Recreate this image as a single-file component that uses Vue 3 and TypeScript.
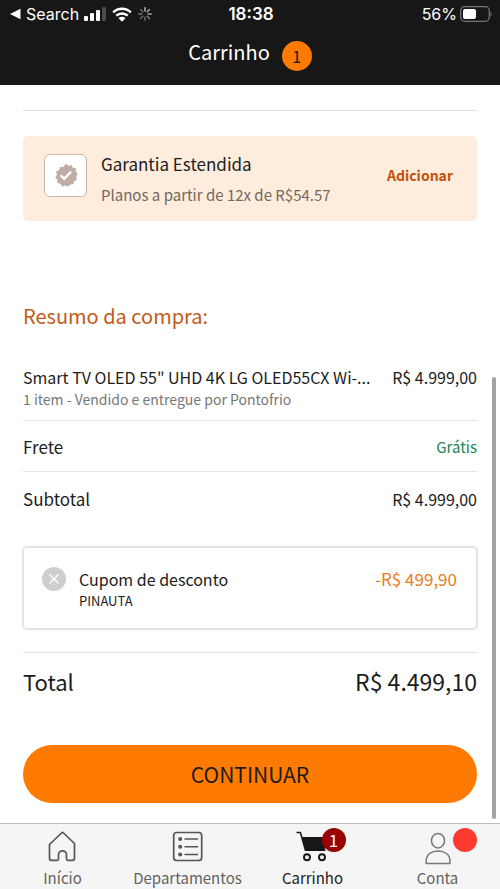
<script setup lang="ts">
interface Tab {
  id: 'home' | 'departments' | 'cart' | 'account'
  label: string
}

const tabs: Tab[] = [
  { id: 'home', label: 'Início' },
  { id: 'departments', label: 'Departamentos' },
  { id: 'cart', label: 'Carrinho' },
  { id: 'account', label: 'Conta' },
]
const activeTab: Tab['id'] = 'cart'
const cartCount = 1
const spokes = [0, 45, 90, 135, 180, 225, 270, 315]
</script>

<template>
  <div class="screen">
    <header class="top">
      <div class="status">
        <div class="status-left">
          <svg width="11" height="12" viewBox="0 0 11 12" aria-hidden="true"><path d="M0 6 10.500 .8v10.400z" fill="#fff" /></svg>
          <span class="status-text back">Search</span>
          <svg class="signal" width="22" height="14" viewBox="0 0 22 14" aria-hidden="true">
            <rect x="0" y="9" width="4" height="5" rx="1" fill="#fff" />
            <rect x="6" y="6" width="4" height="8" rx="1" fill="#fff" />
            <rect x="12" y="3" width="4" height="11" rx="1" fill="#fff" />
            <rect x="18" y="0" width="4" height="14" rx="1" fill="#4b4b4b" />
          </svg>
          <svg class="wifi" width="20" height="15" viewBox="0 0 20 15" aria-hidden="true">
            <path d="M1.200 5.400a12.600 12.600 0 0 1 17.600 0M4.300 8.700a8.200 8.200 0 0 1 11.400 0" fill="none" stroke="#fff" stroke-width="2.500" />
            <path d="M6.500 11.200a5 5 0 0 1 7 0L10 14.800z" fill="#fff" />
          </svg>
          <svg class="spinner" width="14" height="14" viewBox="0 0 14 14" aria-hidden="true">
            <line
              v-for="(angle, i) in spokes"
              :key="angle"
              x1="7" y1=".7" x2="7" y2="4"
              stroke="#fff" stroke-width="1.300" stroke-linecap="round"
              :opacity="i < 4 ? 0.8 - i * 0.1 : 0.4"
              :transform="`rotate(${angle} 7 7)`"
            />
          </svg>
        </div>
        <span class="status-text clock">18:38</span>
        <div class="status-right">
          <span class="status-text">56%</span>
          <svg width="32" height="16" viewBox="0 0 32 16" aria-hidden="true">
            <rect x=".7" y=".7" width="28.600" height="14.600" rx="4" fill="none" stroke="#747474" stroke-width="1.300" />
            <rect x="3" y="3" width="13" height="10" rx="2" fill="#fff" />
            <path d="M30.500 5.500c1.500.6 1.500 4.400 0 5z" fill="#747474" />
          </svg>
        </div>
      </div>
      <div class="title-row">
        <h1>Carrinho</h1>
        <span class="count">{{ cartCount }}</span>
      </div>
    </header>

    <main>
      <section class="warranty">
        <span class="seal-box">
          <svg width="24" height="24" viewBox="0 0 24 24" aria-hidden="true">
            <path d="m12 .8 2.400 2 3-.9 1.400 2.900 3.100.5-.1 3.200 2 2.500-1.600 2.700.7 3.100-2.800 1.500-.9 3-3.200.1-2 2.400-2.800-1.300-3 .9-1.800-2.600-3.100-.8.100-3.200-2.200-2.400 1.700-2.700-.8-3.100 2.900-1.400L5.900 4l3.200-.1z" fill="#c0ada4" />
            <path d="m6.600 12.200 3.600 3.600 7-7.200" fill="none" stroke="#fff" stroke-width="2.300" />
          </svg>
        </span>
        <div class="warranty-text">
          <h2>Garantia Estendida</h2>
          <p>Planos a partir de 12x de R$54.57</p>
        </div>
        <button type="button" class="add">Adicionar</button>
      </section>

      <section class="summary">
        <h2>Resumo da compra:</h2>
        <dl>
          <div class="line product">
            <dt>
              <span class="name">Smart TV OLED 55" UHD 4K LG OLED55CX Wi-...</span>
              <span class="seller">1 item - Vendido e entregue por Pontofrio</span>
            </dt>
            <dd>R$ 4.999,00</dd>
          </div>
          <div class="line">
            <dt>Frete</dt>
            <dd class="free">Grátis</dd>
          </div>
          <div class="line subtotal">
            <dt>Subtotal</dt>
            <dd>R$ 4.999,00</dd>
          </div>
        </dl>

        <div class="coupon">
          <button type="button" class="remove" aria-label="Remover cupom">
            <svg width="12" height="12" viewBox="0 0 12 12" aria-hidden="true"><path d="m1.500 1.500 9 9m0-9-9 9" stroke="#fff" stroke-width="1.400" /></svg>
          </button>
          <div class="coupon-text">
            <span class="coupon-title">Cupom de desconto</span>
            <span class="coupon-code">PINAUTA</span>
          </div>
          <span class="discount">-R$ 499,90</span>
        </div>

        <div class="total">
          <span class="total-label">Total</span>
          <span>R$ 4.499,10</span>
        </div>
      </section>

      <button type="button" class="continue">CONTINUAR</button>
      <span class="scroll-thumb" aria-hidden="true"></span>
    </main>

    <nav>
      <a v-for="tab in tabs" :key="tab.id" href="#" :class="{ active: tab.id === activeTab }">
        <span class="icon">
          <svg v-if="tab.id === 'home'" width="32" height="32" viewBox="0 0 32 32" aria-hidden="true">
            <path d="M3.500 13.500 14.500 3q1-1 2 0L27.500 13.500v14.800q0 2-2 2h-4.700q-1.300 0-1.300-1.300v-4.200a4 4 0 0 0-8 0V29q0 1.300-1.300 1.300H4.500q-2 0-2-2V14.500z" fill="none" stroke="#555" stroke-width="1.700" stroke-linejoin="round" />
          </svg>
          <svg v-else-if="tab.id === 'departments'" width="32" height="32" viewBox="0 0 32 32" aria-hidden="true">
            <rect x="1.700" y="2.500" width="28" height="28" rx="3" fill="none" stroke="#555" stroke-width="1.700" />
            <path d="M12.500 9H26M12.500 16.700H26M12.500 24.500H26" stroke="#555" stroke-width="1.500" />
            <g fill="#555"><circle cx="8.200" cy="9" r="2" /><circle cx="8.200" cy="16.700" r="2" /><circle cx="8.200" cy="24.500" r="2" /></g>
          </svg>
          <svg v-else-if="tab.id === 'cart'" width="32" height="32" viewBox="0 0 32 32" aria-hidden="true">
            <path d="M-.5 2.500h3.900l5 17.700h20" fill="none" stroke="#171717" stroke-width="1.500" stroke-linejoin="round" />
            <path d="M5 7h25l-2.300 13.200H8.700z" fill="#171717" />
            <g fill="none" stroke="#171717" stroke-width="1.900"><circle cx="10" cy="27.300" r="3" /><circle cx="25" cy="27.300" r="3" /></g>
          </svg>
          <svg v-else width="32" height="32" viewBox="0 0 32 32" aria-hidden="true">
            <g fill="none" stroke="#777" stroke-width="1.500" stroke-linejoin="round">
              <ellipse cx="16" cy="10.700" rx="6.500" ry="7.200" />
              <path d="M4.200 33.500v-2.500C4.200 24.300 9.500 21 16 21s12 3.300 12 10v2.500z" />
            </g>
          </svg>
          <span v-if="tab.id === 'cart'" class="badge cart-badge">{{ cartCount }}</span>
          <span v-if="tab.id === 'account'" class="badge dot"></span>
        </span>
        <span>{{ tab.label }}</span>
      </a>
    </nav>
  </div>
</template>

<style>
body {
  margin: 0;
  background: #fff;
}
</style>

<style scoped>
.screen {
  display: flex;
  flex-direction: column;
  min-height: 100vh;
  font-family: "Noto Sans CJK SC", "Noto Sans", sans-serif;
  font-size: 16px;
  line-height: 24px;
  color: #1c1c1c;
}
h1, h2, p, dl, dd {
  margin: 0;
  font-weight: 400;
}
button {
  border: 0;
  padding: 0;
  font: inherit;
  cursor: pointer;
}
svg {
  display: block;
  overflow: visible;
}
.top {
  background: #171717;
  color: #fff;
  padding-bottom: 13px;
}
.status {
  display: grid;
  grid-template-columns: 1fr auto 1fr;
  align-items: center;
  height: 28px;
  padding: 0 8px 0 10px;
  font-family: Inter, "Liberation Sans", sans-serif;
}
.status-text {
  font-size: 16px;
  line-height: 20px;
}
.clock {
  font-size: 17px;
  font-weight: 600;
}
.status-left, .status-right {
  display: flex;
  align-items: center;
}
.back {
  margin: 0 5px;
}
.wifi, .spinner {
  margin-left: 6px;
}
.status-right {
  justify-content: flex-end;
  gap: 3px;
}
.title-row {
  display: flex;
  align-items: center;
  justify-content: center;
  gap: 12px;
  height: 40px;
  padding-top: 4px;
}
h1 {
  font-size: 20px;
  line-height: 32px;
}
.count {
  width: 30px;
  margin-top: 8px;
  border-radius: 15px;
  background: #ff7a00;
  color: #171717;
  font-size: 16px;
  line-height: 30px;
  text-align: center;
}
main {
  position: relative;
  flex: 1;
  padding: 25px 23px 20px;
}
main::before {
  content: "";
  display: block;
  border-top: 1px solid #e0e0e0;
}
.warranty {
  display: flex;
  align-items: center;
  margin-top: 25px;
  padding: 8px 24px 15px 21px;
  border-radius: 5px;
  background: #feecdd;
}
.seal-box {
  display: grid;
  place-items: center;
  width: 41px;
  height: 41px;
  margin-right: 14px;
  border: 1px solid #c9b8ae;
  border-radius: 6px;
  background: #fff;
}
.warranty-text {
  flex: 1;
}
.warranty-text h2 {
  font-size: 17px;
  line-height: 40px;
}
.warranty-text p {
  font-size: 15px;
  line-height: 22px;
  color: #716861;
}
.add {
  background: none;
  color: #c4500b;
  font-size: 14px;
  font-weight: 700;
}
.summary h2 {
  margin: 79px 0 29px;
  font-size: 20px;
  line-height: 32px;
  color: #c35a17;
}
.line {
  display: flex;
  justify-content: space-between;
  padding: 14px 0 12px;
  border-bottom: 1px solid #e4e4e4;
}
.line dt {
  font-size: 17px;
}
.line dd {
  font-size: 16px;
  white-space: nowrap;
}
.product {
  padding: 4px 0 11px;
}
.product dt {
  min-width: 0;
}
.name, .seller {
  display: block;
  white-space: nowrap;
}
.name {
  font-size: 16px;
}
.seller {
  font-size: 14px;
  line-height: 20px;
  color: #777;
}
.line .free {
  font-size: 15px;
  color: #218554;
}
.subtotal {
  padding-top: 15px;
  border-bottom: 0;
}
.coupon {
  display: flex;
  align-items: flex-start;
  margin: 23px -1px 22px;
  padding: 19px 19px 18px 18px;
  border: 2px solid #e4e4e4;
  border-radius: 5px;
}
.remove {
  display: grid;
  place-items: center;
  width: 24px;
  height: 24px;
  margin-right: 13px;
  border-radius: 50%;
  background: #cecece;
}
.coupon-text {
  display: flex;
  flex-direction: column;
  flex: 1;
}
.coupon-title {
  font-size: 16px;
}
.discount {
  font-size: 17px;
  color: #ec7c23;
}
.coupon-code {
  font-size: 13px;
  line-height: 19px;
}
.total {
  display: flex;
  justify-content: space-between;
  padding-top: 12px;
  border-top: 1px solid #e0e0e0;
  font-size: 23px;
  line-height: 32px;
}
.total-label {
  font-size: 22px;
}
.continue {
  display: block;
  width: 100%;
  height: 58px;
  margin-top: 48px;
  border-radius: 29px;
  background: #ff7a00;
  color: #1c1c1c;
  font-size: 21px;
}
.scroll-thumb {
  position: absolute;
  top: 292px;
  right: 4px;
  bottom: 4px;
  width: 4px;
  border-radius: 2px;
  background: #a2a2a2;
}
nav {
  display: grid;
  grid-template-columns: repeat(4, 1fr);
  border-top: 1px solid #bdbdbd;
  background: #f5f5f5;
}
nav a {
  display: flex;
  flex-direction: column;
  align-items: center;
  gap: 4px;
  padding-top: 6px;
  color: #626262;
  font-size: 15px;
  line-height: 23px;
  text-decoration: none;
}
nav .active {
  color: #1c1c1c;
}
.icon {
  position: relative;
}
.badge {
  position: absolute;
  width: 24px;
  height: 24px;
  border-radius: 50%;
  font-size: 17px;
  line-height: 24px;
  text-align: center;
  color: #fff;
}
.cart-badge {
  top: -2px;
  left: 25px;
  background: #990006;
}
.dot {
  top: -2px;
  left: 31px;
  background: #ff3b30;
}
</style>
